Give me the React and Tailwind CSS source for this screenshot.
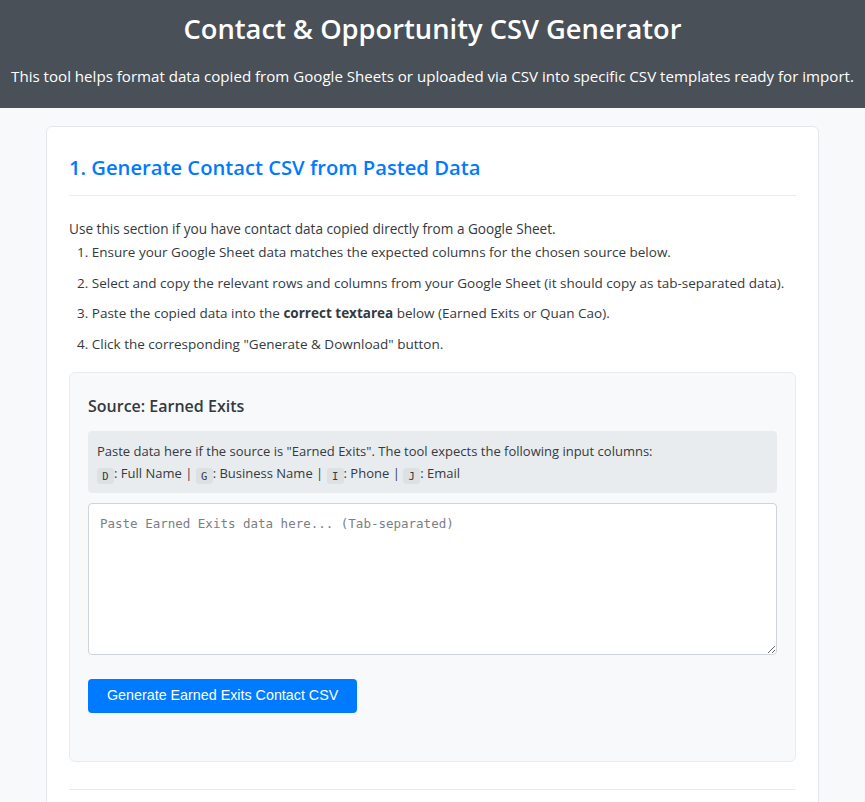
import React from "react";

const ui = { fontFamily: '"Open Sans", "Noto Sans", sans-serif' };
const mono = { fontFamily: '"DejaVu Sans Mono", "Liberation Mono", monospace' };

// pequeño chip para la letra de la columna
const Col = ({ children }) => (
  <code
    style={mono}
    className="inline-block rounded-[3px] bg-[#dee1e4] w-[17px] h-[16px] text-center text-[10.5px] leading-[16px] text-[#343a40] align-[-2px]"
  >
    {children}
  </code>
);

const pasos = [
  <>Ensure your Google Sheet data matches the expected columns for the chosen source below.</>,
  <>Select and copy the relevant rows and columns from your Google Sheet (it should copy as tab-separated data).</>,
  <>
    Paste the copied data into the <strong className="font-bold">correct textarea</strong> below (Earned Exits or Quan Cao).
  </>,
  <>Click the corresponding "Generate &amp; Download" button.</>,
];

export default function App() {
  return (
    <div style={ui} className="min-h-screen bg-[#f8f9fa] text-[#343a40]">
      {/* cabecera */}
      <header className="bg-[#495057] text-white text-center h-[108px] pt-[8px]">
        <h1 className="text-[27.3px] font-semibold leading-[42px]">
          Contact &amp; Opportunity CSV Generator
        </h1>
        <p className="mt-[14px] text-[15.1px] leading-[24px] whitespace-nowrap">
          This tool helps format data copied from Google Sheets or uploaded via CSV into specific CSV templates ready for import.
        </p>
      </header>

      <main className="pt-[18px]">
        <section className="mx-auto w-[773px] bg-white border border-[#e3e6ea] rounded-[6px] px-[22px] pt-[22px] pb-[40px]">
          <h2 className="text-[#007bff] text-[20.2px] font-semibold leading-[36px] pb-[10px] border-b border-[#e9ecef]">
            1. Generate Contact CSV from Pasted Data
          </h2>

          <p className="mt-[22px] text-[13.6px] leading-[22px] text-[#343a40]">
            Use this section if you have contact data copied directly from a Google Sheet.
          </p>
          <ol className="mt-[1px] pl-[8px] text-[13.5px] text-[#343a40]">
            {pasos.map((p, i) => (
              <li key={i} className="leading-[22px] mb-[8.7px] whitespace-nowrap">
                {i + 1}. {p}
              </li>
            ))}
          </ol>

          {/* bloque de fuente */}
          <div className="mt-[17px] bg-[#f8f9fa] border border-[#e9ecef] rounded-[6px] px-[18px] pt-[20px] pb-[48px]">
            <h3 className="text-[16px] font-semibold leading-[26px] text-[#343a40]">
              Source: Earned Exits
            </h3>
            <div className="mt-[12px] bg-[#e9ecef] rounded-[4px] px-[9px] py-[9px] text-[13px] leading-[22px] text-[#343a40]">
              <div>
                Paste data here if the source is "Earned Exits". The tool expects the following input columns:
              </div>
              <div className="h-[22px]">
                <Col>D</Col>: Full Name | <Col>G</Col>: Business Name | <Col>I</Col>: Phone | <Col>J</Col>: Email
              </div>
            </div>

            <textarea
              style={mono}
              placeholder="Paste Earned Exits data here... (Tab-separated)"
              className="mt-[10px] block w-full h-[152px] bg-white border border-[#ced4da] rounded-[4px] px-[11px] py-[10px] text-[12.5px] leading-[20px] placeholder:text-[#7b7f84] outline-none"
            />

            <button
              style={{ fontFamily: '"Liberation Sans", Arial, sans-serif' }}
              className="mt-[24px] h-[34px] px-[19px] bg-[#007bff] text-white text-[14.3px] rounded-[4px]"
            >
              Generate Earned Exits Contact CSV
            </button>
          </div>

          <hr className="mt-[27px] border-0 border-t border-[#e9ecef]" />
        </section>
      </main>
    </div>
  );
}
